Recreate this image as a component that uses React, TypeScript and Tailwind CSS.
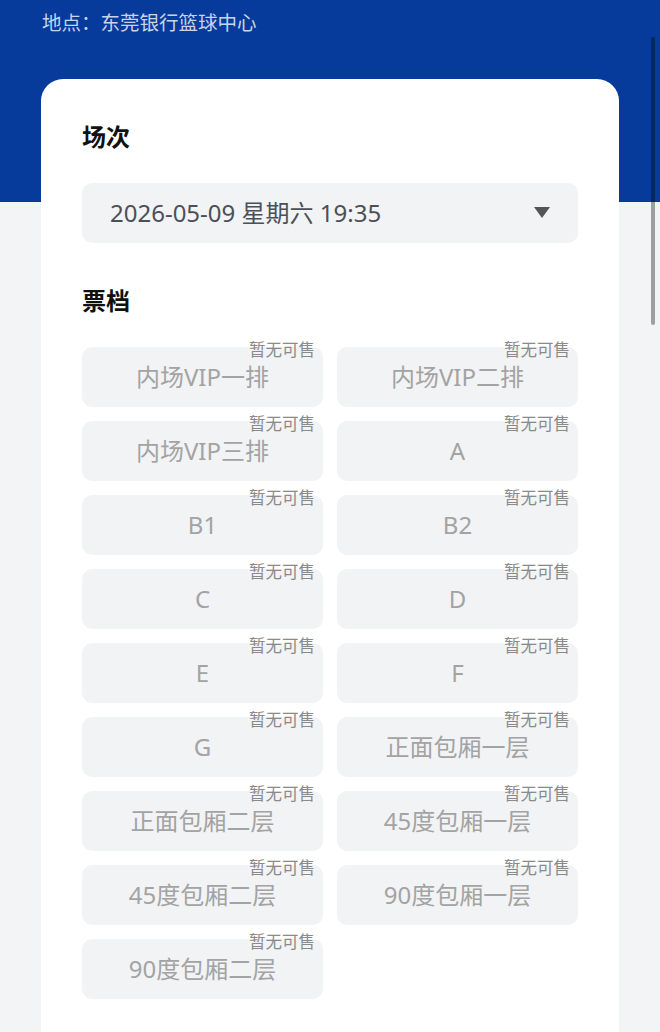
import React from "react";

const tiers = [
  "内场VIP一排",
  "内场VIP二排",
  "内场VIP三排",
  "A",
  "B1",
  "B2",
  "C",
  "D",
  "E",
  "F",
  "G",
  "正面包厢一层",
  "正面包厢二层",
  "45度包厢一层",
  "45度包厢二层",
  "90度包厢一层",
  "90度包厢二层",
];

export default function App() {
  return (
    <div
      className="relative w-[660px] h-[1032px] overflow-hidden bg-[#f3f4f6]"
      style={{ fontFamily: '"Noto Sans", "Noto Sans CJK SC", sans-serif' }}
    >
      <div className="absolute left-0 top-0 w-full h-[202px] bg-[#063b9b]" />
      <div className="relative px-[41px]">
        <div className="h-[79px] pt-[8px]">
          <div className="text-[19.5px] leading-[30px] text-[#c9d3ea] pl-[1px]">地点：东莞银行篮球中心</div>
        </div>
        <div className="bg-white rounded-t-[22px] w-[578px] h-[960px] px-[41px] pt-[40px]">
          <div className="text-[24px] leading-[36px] font-bold text-[#111]">场次</div>
          <div className="mt-[28px] h-[60px] rounded-[10px] bg-[#f2f3f5] flex items-center justify-between pl-[28px] pr-[28px]">
            <span className="text-[24px] leading-[32px] text-[#4b4f58]">2026-05-09 星期六 19:35</span>
            <svg width="16" height="12" viewBox="0 0 16 12">
              <polygon points="0,0 16,0 8,11" fill="#555" />
            </svg>
          </div>
          <div className="mt-[40px] text-[24px] leading-[36px] font-bold text-[#111]">票档</div>
          <div className="mt-[28px] grid grid-cols-2 gap-x-[14px] gap-y-[14px]">
            {tiers.map((t) => (
              <div
                key={t}
                className="relative h-[60px] rounded-[10px] bg-[#f2f3f5] flex items-center justify-center"
              >
                <span className="text-[24px] leading-[32px] text-[#a3a3a3]">{t}</span>
                <span className="absolute right-[8px] top-[-8px] text-[16.5px] leading-[22px] text-[#8a8a8a]">
                  暂无可售
                </span>
              </div>
            ))}
          </div>
        </div>
      </div>
      <div className="absolute right-[5px] top-[37px] w-[4px] h-[288px] rounded-full bg-[rgba(0,0,0,0.35)]" />
    </div>
  );
}
